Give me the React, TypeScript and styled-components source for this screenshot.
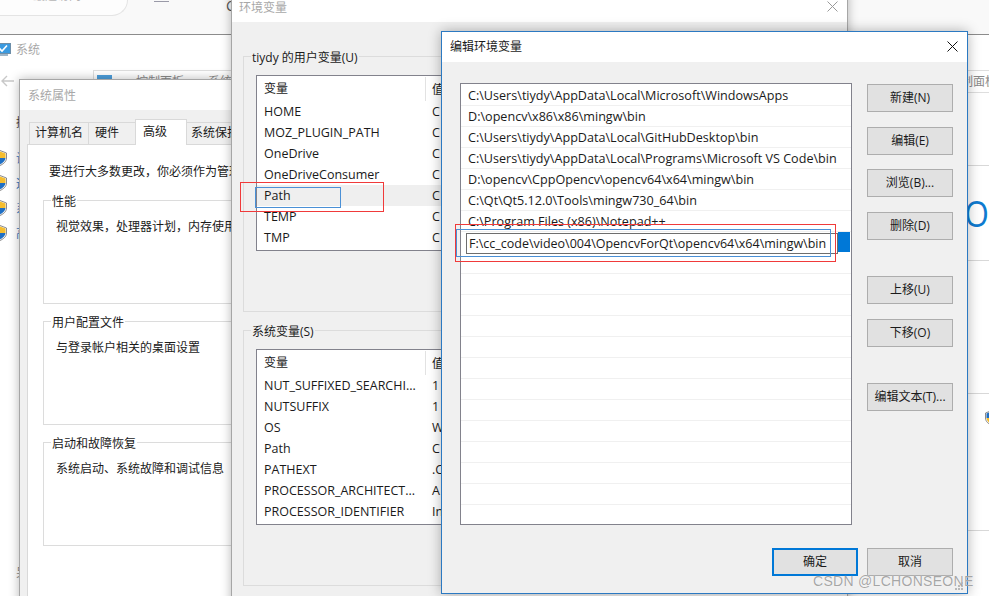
import React from 'react'
import styled, { createGlobalStyle } from 'styled-components'

const UI_FONT = `"Open Sans", "Noto Sans CJK SC", sans-serif`

const GlobalStyle = createGlobalStyle`
    html, body {
        margin: 0;
        padding: 0;
        background: #fff;
        overflow: hidden;
    }
    * {
        box-sizing: border-box;
    }
`

interface WinProps {
    $x: number,
    $y: number,
    $w: number,
    $h: number
}

const userVars = ['HOME', 'MOZ_PLUGIN_PATH', 'OneDrive', 'OneDriveConsumer', 'Path', 'TEMP', 'TMP']
const sysVars = [
    ['NUT_SUFFIXED_SEARCHI...', '1'],
    ['NUTSUFFIX', '1'],
    ['OS', 'W'],
    ['Path', 'C'],
    ['PATHEXT', '.C'],
    ['PROCESSOR_ARCHITECT...', 'A'],
    ['PROCESSOR_IDENTIFIER', 'In']
]
const paths = [
    'C:\\Users\\tiydy\\AppData\\Local\\Microsoft\\WindowsApps',
    'D:\\opencv\\x86\\x86\\mingw\\bin',
    'C:\\Users\\tiydy\\AppData\\Local\\GitHubDesktop\\bin',
    'C:\\Users\\tiydy\\AppData\\Local\\Programs\\Microsoft VS Code\\bin',
    'D:\\opencv\\CppOpencv\\opencv64\\x64\\mingw\\bin',
    'C:\\Qt\\Qt5.12.0\\Tools\\mingw730_64\\bin',
    'C:\\Program Files (x86)\\Notepad++'
]

function Shield() {
    return (
        <svg width="16" height="16" viewBox="0 0 16 16">
            <path d="M8 0.5 L14.5 3 V8 C14.5 11.5 11.5 14 8 15.5 C4.5 14 1.5 11.5 1.5 8 V3 Z" fill="#f7f7f7" stroke="#6f6f6f" strokeWidth="0.8"/>
            <path d="M8 1.5 L2.5 3.5 V8 H8 Z" fill="#1f6fc4"/>
            <path d="M8 1.5 L13.5 3.5 V8 H8 Z" fill="#f5bd2e"/>
            <path d="M2.5 8 H8 V14.3 C5.2 13 2.8 11 2.5 8 Z" fill="#f5bd2e"/>
            <path d="M13.5 8 H8 V14.3 C10.8 13 13.2 11 13.5 8 Z" fill="#1f6fc4"/>
        </svg>
    )
}

function CloseIcon({ color }: { color: string }) {
    return (
        <svg width="11" height="11" viewBox="0 0 11 11">
            <path d="M0.5 0.5 L10.5 10.5 M10.5 0.5 L0.5 10.5" stroke={color} strokeWidth="1" fill="none"/>
        </svg>
    )
}

function App() {
    return (
        <Desktop>
            <GlobalStyle/>

            <BrowserStrip>
                <SearchBox><FadedTab>最近访问</FadedTab></SearchBox>
                <StripMark/>
                <StripLetter>C</StripLetter>
            </BrowserStrip>

            <SystemWindow>
                <SysTitle>
                    <SysIcon>
                        <svg width="16" height="13" viewBox="0 0 16 13">
                            <rect x="0.5" y="0.5" width="15" height="10" fill="#3a9ae0" stroke="#6d8ea8"/>
                            <path d="M4 5 L7 8 L12 2.5" stroke="#fff" strokeWidth="1.6" fill="none"/>
                            <rect x="3" y="11" width="10" height="2" fill="#9fb6c8"/>
                        </svg>
                    </SysIcon>
                    系统
                </SysTitle>
                <NavBar>
                    <NavArrows>
                        <svg width="14" height="12" viewBox="0 0 14 12">
                            <path d="M6 1 L1 6 L6 11 M1 6 H13" stroke="#c8c8c8" strokeWidth="1.4" fill="none"/>
                        </svg>
                    </NavArrows>
                    <Breadcrumb>
                        <CrumbIcon/>
                        <Crumb>控制面板</Crumb>
                        <Crumb>系统和安全</Crumb>
                        <CrumbRight>制面板</CrumbRight>
                    </Breadcrumb>
                </NavBar>
                <SysBody>
                    <SideList>
                        <SideHeading>控</SideHeading>
                        <SideItem><Shield/><span>设</span></SideItem>
                        <SideItem><Shield/><span>远</span></SideItem>
                        <SideItem><Shield/><span>系</span></SideItem>
                        <SideItem><Shield/><span>高</span></SideItem>
                        <SideFooter>另</SideFooter>
                    </SideList>
                    <SysPane>
                        <PaneSection $h={95}>
                            <BigLetter>O</BigLetter>
                        </PaneSection>
                        <PaneSection $h={133}/>
                        <PaneSection $h={137}>
                            <PaneShield><Shield/></PaneShield>
                        </PaneSection>
                        <PaneSection $h={66}/>
                    </SysPane>
                </SysBody>
            </SystemWindow>

            <Win $x={19} $y={79} $w={213} $h={540}>
                <FadedTitle>系统属性</FadedTitle>
                <PropsBody>
                    <TabRow>
                        <Tab $w={60} $pad={5}>计算机名</Tab>
                        <Tab $w={48} $pad={6}>硬件</Tab>
                        <Tab $active $w={52} $pad={7}>高级</Tab>
                        <Tab $w={71} $pad={4}>系统保护</Tab>
                    </TabRow>
                    <TabPanel>
                        <PanelNote>要进行大多数更改，你必须作为管理员登录。</PanelNote>
                        <PropGroup>
                            <GroupLabel>性能</GroupLabel>
                            <PropText>视觉效果，处理器计划，内存使用，以及虚拟内存</PropText>
                        </PropGroup>
                        <PropGroup>
                            <GroupLabel>用户配置文件</GroupLabel>
                            <PropText>与登录帐户相关的桌面设置</PropText>
                        </PropGroup>
                        <PropGroup>
                            <GroupLabel>启动和故障恢复</GroupLabel>
                            <PropText>系统启动、系统故障和调试信息</PropText>
                        </PropGroup>
                    </TabPanel>
                </PropsBody>
            </Win>

            <Win $x={231} $y={-10} $w={617} $h={640}>
                <EnvTitle>
                    <span>环境变量</span>
                    <CloseIcon color="#9a9a9a"/>
                </EnvTitle>
                <EnvBody>
                    <VarGroup>
                        <GroupLabel>tiydy 的用户变量(U)</GroupLabel>
                        <VarList>
                            <VarHeader>
                                <NameCell>变量</NameCell>
                                <ValueCell>值</ValueCell>
                            </VarHeader>
                            {userVars.map((name) => (
                                <VarRow key={name} $selected={name === 'Path'}>
                                    <NameCell>{name}</NameCell>
                                    <ValueCell>C</ValueCell>
                                </VarRow>
                            ))}
                        </VarList>
                    </VarGroup>
                    <VarGroup>
                        <GroupLabel>系统变量(S)</GroupLabel>
                        <VarList>
                            <VarHeader>
                                <NameCell>变量</NameCell>
                                <ValueCell>值</ValueCell>
                            </VarHeader>
                            {sysVars.map(([name, value]) => (
                                <VarRow key={name}>
                                    <NameCell>{name}</NameCell>
                                    <ValueCell>{value}</ValueCell>
                                </VarRow>
                            ))}
                        </VarList>
                    </VarGroup>
                </EnvBody>
            </Win>

            <EditWin $x={441} $y={31} $w={527} $h={563}>
                <EditTitle>
                    <span>编辑环境变量</span>
                    <CloseIcon color="#111"/>
                </EditTitle>
                <EditBody>
                    <EditMain>
                        <PathList>
                            {paths.map((p) => <PathRow key={p}>{p}</PathRow>)}
                            <PathEditRow>
                                <PathEdit>F:\cc_code\video\004\OpencvForQt\opencv64\x64\mingw\bin</PathEdit>
                                <PathSelect/>
                            </PathEditRow>
                            {Array.from({ length: 13 }).map((_, i) => <PathRow key={i}/>)}
                        </PathList>
                        <ButtonColumn>
                            <ButtonGroup>
                                <DlgButton>新建(N)</DlgButton>
                                <DlgButton>编辑(E)</DlgButton>
                                <DlgButton>浏览(B)...</DlgButton>
                                <DlgButton>删除(D)</DlgButton>
                            </ButtonGroup>
                            <ButtonGroup>
                                <DlgButton>上移(U)</DlgButton>
                                <DlgButton>下移(O)</DlgButton>
                            </ButtonGroup>
                            <ButtonGroup>
                                <DlgButton>编辑文本(T)...</DlgButton>
                            </ButtonGroup>
                        </ButtonColumn>
                    </EditMain>
                    <EditFooter>
                        <DlgButton $primary>确定</DlgButton>
                        <DlgButton>取消</DlgButton>
                    </EditFooter>
                </EditBody>
                <ResizeGrip>
                    <svg width="9" height="9" viewBox="0 0 9 9" fill="#b8b8b8">
                        <rect x="6" y="0" width="2" height="2"/>
                        <rect x="3" y="3" width="2" height="2"/>
                        <rect x="6" y="3" width="2" height="2"/>
                        <rect x="0" y="6" width="2" height="2"/>
                        <rect x="3" y="6" width="2" height="2"/>
                        <rect x="6" y="6" width="2" height="2"/>
                    </svg>
                </ResizeGrip>
            </EditWin>

            <Mark $x={240} $y={182} $w={144} $h={30} $color="#f03a3a"/>
            <Mark $x={255} $y={187} $w={86} $h={21} $color="#4a90d6"/>
            <Mark $x={455} $y={224} $w={381} $h={38} $color="#f03a3a"/>
            <Mark $x={456} $y={229} $w={375} $h={28} $color="#4a90d6"/>

            <Watermark>CSDN @LCHONSEONE</Watermark>
        </Desktop>
    )
}

export default App

const Desktop = styled.div`
    position: relative;
    width: 989px;
    height: 596px;
    overflow: hidden;
    background: #fff;
    font-family: ${UI_FONT};
    font-size: 12px;
    color: #1a1a1a;
`

const BrowserStrip = styled.div`
    display: flex;
    height: 34px;
    background: #f9f9f9;
    overflow: hidden;
`

const SearchBox = styled.div`
    flex: none;
    width: 148px;
    height: 16px;
    margin-left: -20px;
    padding-left: 52px;
    border: 1px solid #e4e4e4;
    border-top: none;
    border-radius: 0 0 16px 16px;
    background: #fdfdfd;
    overflow: hidden;
`

const FadedTab = styled.div`
    margin-top: -14px;
    color: #b5b5b5;
    font-size: 12px;
`

const StripMark = styled.div`
    flex: none;
    width: 15px;
    height: 1px;
    margin: 1px 0 0 26px;
    background: #9a9aa8;
`

const StripLetter = styled.div`
    flex: none;
    margin: -4px 0 0 57px;
    color: #555;
    font-size: 14px;
`

const SystemWindow = styled.div`
    display: flex;
    flex-direction: column;
    height: 562px;
    border-top: 1px solid #8c8c8c;
    background: #fff;
`

const SysTitle = styled.div`
    display: flex;
    align-items: center;
    height: 29px;
    padding-bottom: 1px;
    color: #a8a8a8;
    font-size: 12px;
`

const SysIcon = styled.div`
    display: flex;
    width: 16px;
    margin-left: -5px;
    margin-right: 5px;
`

const NavBar = styled.div`
    display: flex;
    align-items: center;
    height: 24px;
    margin-top: 5px;
`

const NavArrows = styled.div`
    display: flex;
    width: 93px;
    padding-left: 1px;
`

const Breadcrumb = styled.div`
    display: flex;
    flex: 1;
    align-items: center;
    height: 23px;
    padding-left: 3px;
    border: 1px solid #dedede;
    border-right: none;
    color: #8a8a8a;
    gap: 24px;
    overflow: hidden;
`

const CrumbIcon = styled.div`
    width: 15px;
    height: 13px;
    background: #4d9fdc;
`

const Crumb = styled.span`
    white-space: nowrap;
`

const CrumbRight = styled.span`
    margin-left: auto;
    margin-right: -8px;
    white-space: nowrap;
`

const SysBody = styled.div`
    display: flex;
    flex: 1;
    min-height: 0;
`

const SideList = styled.div`
    display: flex;
    flex-direction: column;
    width: 100px;
    padding-top: 18px;
`

const SideHeading = styled.div`
    display: flex;
    align-items: center;
    height: 22px;
    margin-left: 16px;
    margin-bottom: 12px;
    color: #444;
`

const SideItem = styled.div`
    display: flex;
    align-items: center;
    gap: 8px;
    height: 25px;
    margin-left: -8px;
    color: #3b7ac0;
    svg {
        flex: none;
    }
`

const SideFooter = styled.div`
    margin-top: 318px;
    margin-left: 16px;
    color: #888;
`

const SysPane = styled.div`
    flex: 1;
    padding-top: 72px;
    padding-left: 250px;
`

const PaneSection = styled.div<{ $h: number }>`
    display: flex;
    justify-content: flex-end;
    height: ${(p) => p.$h}px;
    border-top: 1px solid #d8d8d8;
`

const BigLetter = styled.div`
    margin: 25px 0 0 0;
    color: #0f7bd0;
    font-size: 36px;
    font-weight: 400;
    line-height: 46px;
    transform: scaleX(0.88);
    transform-origin: right center;
`

const PaneShield = styled.div`
    display: flex;
    margin: 16px -11px 0 0;
    height: 16px;
`

const Win = styled.div<WinProps>`
    position: absolute;
    left: ${(p) => p.$x}px;
    top: ${(p) => p.$y}px;
    width: ${(p) => p.$w}px;
    height: ${(p) => p.$h}px;
    display: flex;
    flex-direction: column;
    background: #fff;
    border: 1px solid #a6a6a6;
    box-shadow: 0 0 10px rgba(0, 0, 0, 0.28);
`

const EditWin = styled(Win)`
    border-color: #2b79c2;
    background: #f0f0f0;
    box-shadow: 0 0 12px rgba(0, 0, 0, 0.3);
`

const FadedTitle = styled.div`
    display: flex;
    flex: none;
    align-items: center;
    height: 30px;
    padding-left: 8px;
    color: #a8a8a8;
`

const PropsBody = styled.div`
    flex: 1;
    min-height: 0;
    padding: 9px 0 0 7px;
    background: #f0f0f0;
`

const TabRow = styled.div`
    display: flex;
    align-items: flex-end;
    height: 25px;
    padding-left: 2px;
    white-space: nowrap;
`

const Tab = styled.div<{ $active?: boolean, $w: number, $pad: number }>`
    display: flex;
    align-items: center;
    flex: none;
    width: ${(p) => p.$w}px;
    height: ${(p) => (p.$active ? 26 : 22)}px;
    margin-bottom: ${(p) => (p.$active ? -1 : 0)}px;
    margin-right: -1px;
    padding: 0 0 ${(p) => (p.$active ? 4 : 3)}px ${(p) => p.$pad}px;
    background: ${(p) => (p.$active ? '#fff' : '#f0f0f0')};
    border: 1px solid #d9d9d9;
    border-bottom: none;
    position: relative;
    z-index: ${(p) => (p.$active ? 1 : 0)};
`

const TabPanel = styled.div`
    height: 480px;
    padding: 17px 0 0 15px;
    background: #fff;
    border-top: 1px solid #d9d9d9;
    border-left: 1px solid #d9d9d9;
    overflow: hidden;
`

const PanelNote = styled.div`
    margin-left: 6px;
    margin-bottom: 21px;
    height: 17px;
    white-space: nowrap;
`

const PropGroup = styled.div`
    position: relative;
    width: 400px;
    height: 104px;
    margin-bottom: 17px;
    padding: 16px 0 0 12px;
    border: 1px solid #dcdcdc;
    background: #fff;
`

const GroupLabel = styled.span`
    position: absolute;
    top: -8px;
    left: 7px;
    padding: 0 1px;
    background: inherit;
    white-space: nowrap;
    line-height: 17px;
`

const PropText = styled.div`
    white-space: nowrap;
`

const EnvTitle = styled.div`
    display: flex;
    flex: none;
    align-items: center;
    justify-content: space-between;
    height: 31px;
    padding: 0 9px 0 7px;
    color: #a8a8a8;
`

const EnvBody = styled.div`
    flex: 1;
    min-height: 0;
    padding: 34px 11px 0 11px;
    background: #f0f0f0;
`

const VarGroup = styled.div`
    position: relative;
    height: 256px;
    margin-bottom: 18px;
    padding: 18px 0 0 12px;
    border: 1px solid #dcdcdc;
    background: #f0f0f0;
`

const VarList = styled.div`
    height: 176px;
    width: 350px;
    background: #fff;
    border: 1px solid #82828c;
    overflow: hidden;
`

const VarHeader = styled.div`
    display: flex;
    align-items: center;
    height: 25px;
    background: #fff;
`

const VarRow = styled.div<{ $selected?: boolean }>`
    display: flex;
    align-items: center;
    height: 21px;
    font-size: 12.5px;
    background: ${(p) => (p.$selected ? '#efefef' : '#fff')};
`

const NameCell = styled.div`
    width: 169px;
    padding-left: 7px;
    margin-right: 6px;
    white-space: nowrap;
    overflow: hidden;
    ${VarHeader} & {
        border-right: 1px solid #e2e2e2;
        height: 24px;
        line-height: 24px;
    }
`

const ValueCell = styled.div`
    white-space: nowrap;
`

const EditTitle = styled.div`
    display: flex;
    flex: none;
    align-items: center;
    justify-content: space-between;
    height: 30px;
    padding: 0 9px 2px 8px;
    background: #fff;
`

const EditBody = styled.div`
    display: flex;
    flex-direction: column;
    flex: 1;
    min-height: 0;
    padding: 21px 14px 0 18px;
`

const EditMain = styled.div`
    display: flex;
    gap: 15px;
`

const PathList = styled.div`
    width: 392px;
    height: 442px;
    padding-top: 1px;
    background: #fff;
    border: 1px solid #82828c;
    overflow: hidden;
`

const PathRow = styled.div`
    display: flex;
    align-items: center;
    height: 21px;
    padding: 1px 0 0 7px;
    font-size: 12.6px;
    border-bottom: 1px solid #f0f0f0;
    white-space: nowrap;
`

const PathEditRow = styled.div`
    display: flex;
    align-items: flex-start;
    height: 22px;
    margin-bottom: -1px;
    padding: 1px 0 0 5px;
    font-size: 12.5px;
    white-space: nowrap;
`

const PathEdit = styled.div`
    display: flex;
    flex: none;
    align-items: center;
    width: 372px;
    height: 21px;
    padding-left: 2px;
    border: 1px solid #6e6e6e;
    background: #fff;
`

const PathSelect = styled.div`
    flex: none;
    width: 12px;
    height: 20px;
    margin-top: -1px;
    background: #0078d7;
`

const ButtonColumn = styled.div`
    display: flex;
    flex-direction: column;
    gap: 36px;
    padding-top: 1px;
`

const ButtonGroup = styled.div`
    display: flex;
    flex-direction: column;
    gap: 14.67px;
`

const DlgButton = styled.div<{ $primary?: boolean }>`
    display: flex;
    align-items: center;
    justify-content: center;
    width: 86px;
    height: 28px;
    padding-bottom: 2px;
    background: #e1e1e1;
    border: ${(p) => (p.$primary ? '2px solid #0078d7' : '1px solid #adadad')};
    white-space: nowrap;
`

const EditFooter = styled.div`
    display: flex;
    justify-content: flex-end;
    gap: 9px;
    margin-top: 23px;
`

const ResizeGrip = styled.div`
    position: absolute;
    right: 3px;
    bottom: 2px;
    display: flex;
`

const Mark = styled.div<WinProps & { $color: string }>`
    position: absolute;
    left: ${(p) => p.$x}px;
    top: ${(p) => p.$y}px;
    width: ${(p) => p.$w}px;
    height: ${(p) => p.$h}px;
    border: 1px solid ${(p) => p.$color};
`

const Watermark = styled.div`
    position: absolute;
    left: 813px;
    top: 573px;
    color: rgba(150, 150, 150, 0.85);
    font-family: "Liberation Sans", sans-serif;
    font-size: 14px;
    letter-spacing: 0.3px;
    white-space: nowrap;
    text-shadow: 0 0 1px #fff;
`
